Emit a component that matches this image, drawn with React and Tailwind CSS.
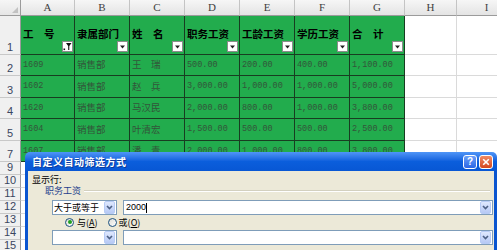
import React from "react";

const W = ["w-[54px]", "w-[55px]", "w-[55px]", "w-[55px]", "w-[55px]", "w-[55px]", "w-[55px]", "w-[52px]", "w-[60px]"];
const LETTERS = ["A", "B", "C", "D", "E", "F", "G", "H", "I"];
const HEAD = ["工　号", "隶属部门", "姓　名", "职务工资", "工龄工资", "学历工资", "合　计"];
const ROWS = [
  { n: "2", h: "h-[21px]", d: ["1609", "销售部", "王　瑞", "500.00", "200.00", "400.00", "1,100.00"] },
  { n: "3", h: "h-[22px]", d: ["1602", "销售部", "赵　兵", "3,000.00", "1,000.00", "1,000.00", "5,000.00"] },
  { n: "4", h: "h-[21px]", d: ["1620", "销售部", "马汉民", "2,000.00", "800.00", "1,000.00", "3,800.00"] },
  { n: "5", h: "h-[22px]", d: ["1604", "销售部", "叶清宏", "1,500.00", "500.00", "500.00", "2,500.00"] },
  { n: "7", h: "h-[21px]", d: ["1607", "销售部", "潘　青", "2,000.00", "1,000.00", "800.00", "3,800.00"] },
];
const EMPTY = ["9", "10", "11", "12", "13", "14", "15"];

const cjk = { fontFamily: '"Noto Sans CJK SC", "Noto Sans", sans-serif' };
const mono = { fontFamily: '"Liberation Mono", "DejaVu Sans Mono", monospace' };

function RowHead({ n, h }) {
  return (
    <div
      className={`${h} w-[21px] shrink-0 bg-[#f0f0f0] border-r border-b border-r-[#9b9b9b] border-b-[#c8c8c8] flex items-end justify-center pb-[1px] text-[11px] leading-none text-[#3a4660]`}
      style={{ fontFamily: '"Liberation Sans", Arial, sans-serif' }}
    >
      {n}
    </div>
  );
}

function FilterBtn({ active }) {
  return (
    <div className="absolute right-[1px] bottom-[2px] w-[11px] h-[11px] bg-white border border-[#8c8c8c] flex items-center justify-center">
      {active ? (
        <svg width="9" height="9" viewBox="0 0 9 9">
          <polygon points="3,1 8.5,1 6.3,4 6.3,8 5.2,8 5.2,4" fill="#111" />
          <rect x="0.5" y="6.5" width="1.6" height="1.6" fill="#111" />
        </svg>
      ) : (
        <svg width="7" height="4" viewBox="0 0 7 4">
          <polygon points="1,0.5 6,0.5 3.5,3.5" fill="#222" />
        </svg>
      )}
    </div>
  );
}

function DropBtn() {
  return (
    <div className="w-[11px] h-[13px] mr-[1px] shrink-0 rounded-[2px] border border-[#b7cbf5] bg-gradient-to-b from-[#dfe8fd] to-[#b6c9f5] flex items-center justify-center">
      <svg width="7" height="5" viewBox="0 0 7 5">
        <polyline points="1,1 3.5,3.6 6,1" fill="none" stroke="#4d6185" strokeWidth="1.6" />
      </svg>
    </div>
  );
}

function Radio({ on }) {
  return (
    <div className="w-[9px] h-[9px] rounded-full border border-[#1c5180] bg-gradient-to-br from-[#dcdcd6] to-white flex items-center justify-center">
      {on && <div className="w-[4px] h-[4px] rounded-full bg-[#21a121]" />}
    </div>
  );
}

function Dialog() {
  return (
    <div className="absolute left-[25px] top-[152px] w-[472px] h-[98px] flex flex-col" style={cjk}>
      <div className="h-[19px] shrink-0 rounded-t-[5px] bg-gradient-to-b from-[#4f95f7] via-[#0b5edc] to-[#0857d4] flex items-center pl-[7px] pr-[4px]">
        <span className="text-[10px] font-bold text-white leading-none tracking-[0.5px]" style={{ textShadow: "1px 1px 0 #0a3a9a" }}>
          自定义自动筛选方式
        </span>
        <div className="ml-auto flex gap-[2px]">
          <div className="w-[14px] h-[14px] rounded-[3px] border border-white bg-gradient-to-b from-[#6b9ff8] to-[#2a66e6] flex items-center justify-center text-white text-[10px] font-bold leading-none" style={{ fontFamily: '"Liberation Sans", Arial, sans-serif' }}>
            ?
          </div>
          <div className="w-[14px] h-[14px] rounded-[3px] border border-white bg-gradient-to-b from-[#f08a64] to-[#d4461c] flex items-center justify-center">
            <svg width="8" height="8" viewBox="0 0 8 8">
              <path d="M1.2 1.2 L6.8 6.8 M6.8 1.2 L1.2 6.8" stroke="#fff" strokeWidth="1.6" />
            </svg>
          </div>
        </div>
      </div>
      <div className="flex-1 bg-[#ece9d8] border-l-[3px] border-r-[3px] border-[#0a55d0] pt-[3px] text-[9px] text-black">
        <div className="h-[11px] leading-[11px] pl-[4px]">显示行:</div>
        <div className="h-[11px] flex items-center pl-[17px] pr-[4px]">
          <span className="leading-[11px] text-[#1e3f8c]">职务工资</span>
          <div className="flex-1 ml-[3px] border-t border-b border-t-[#d3d0bf] border-b-white" />
        </div>
        <div className="mt-[4px] h-[15px] flex pl-[24px] pr-[1px] gap-[6px]">
          <div className="w-[65px] h-full bg-white border border-[#7f9db9] flex items-center">
            <span className="flex-1 pl-[1px] leading-none">大于或等于</span>
            <DropBtn />
          </div>
          <div className="flex-1 h-full bg-white border border-[#7f9db9] flex items-center">
            <span className="pl-[2px] leading-none" style={{ fontFamily: '"Liberation Sans", Arial, sans-serif' }}>2000</span>
            <div className="w-[1px] h-[10px] bg-black" />
            <div className="flex-1" />
            <DropBtn />
          </div>
        </div>
        <div className="h-[14px] flex items-center pl-[37px]">
          <Radio on />
          <span className="ml-[3px] leading-none">
            与(<span className="underline">A</span>)
          </span>
          <div className="ml-[10px]">
            <Radio />
          </div>
          <span className="ml-[2px] leading-none">
            或(<span className="underline">O</span>)
          </span>
        </div>
        <div className="mt-[1px] h-[15px] flex pl-[24px] pr-[1px] gap-[6px]">
          <div className="w-[65px] h-full bg-white border border-[#7f9db9] flex items-center justify-end">
            <DropBtn />
          </div>
          <div className="flex-1 h-full bg-white border border-[#7f9db9] flex items-center justify-end">
            <DropBtn />
          </div>
        </div>
      </div>
    </div>
  );
}

export default function App() {
  return (
    <div className="relative w-[497px] h-[250px] overflow-hidden bg-white">
      {/* column headers */}
      <div className="flex h-[16px]">
        <div className="w-[21px] shrink-0 h-full bg-gradient-to-b from-[#f6f6f6] to-[#e6e6e6] border-r border-b border-[#9b9b9b] flex items-end justify-end p-[2px]">
          <svg width="6" height="6" viewBox="0 0 6 6">
            <polygon points="6,0 6,6 0,6" fill="#c2c2c2" />
          </svg>
        </div>
        {LETTERS.map((l, i) => (
          <div
            key={l}
            className={`${W[i]} shrink-0 h-full bg-gradient-to-b from-[#f6f6f6] to-[#e4e4e4] border-r border-b border-r-[#c4c4c4] border-b-[#9b9b9b] flex items-center justify-center text-[11px] text-[#404040]`}
            style={{ fontFamily: '"Liberation Serif", "Times New Roman", serif' }}
          >
            {l}
          </div>
        ))}
      </div>
      {/* row 1 */}
      <div className="flex">
        <RowHead n="1" h="h-[39px]" />
        {HEAD.map((t, i) => (
          <div
            key={i}
            className={`${W[i]} shrink-0 h-[39px] relative bg-[#22ac4d] border-r border-b border-[#183d21] flex items-center pl-[2px] pb-[1px]`}
          >
            <span className="text-[10.5px] font-bold text-black leading-none" style={cjk}>{t}</span>
            <FilterBtn active={i === 0} />
          </div>
        ))}
        {[7, 8].map((i) => (
          <div key={i} className={`${W[i]} shrink-0 h-[39px] border-r border-b border-[#dadada]`} />
        ))}
      </div>
      {ROWS.map((r) => (
        <div key={r.n} className="flex">
          <RowHead n={r.n} h={r.h} />
          {r.d.map((v, i) => (
            <div
              key={i}
              className={`${W[i]} ${r.h} shrink-0 bg-[#22ac4d] border-r border-b border-[#183d21] flex items-center pl-[2px] text-[#33553a] leading-none`}
            >
              {i === 1 || i === 2 ? (
                <span className="text-[9.5px]" style={cjk}>{v}</span>
              ) : (
                <span className="text-[8.5px]" style={mono}>{v}</span>
              )}
            </div>
          ))}
          {[7, 8].map((i) => (
            <div key={i} className={`${W[i]} ${r.h} shrink-0 border-r border-b border-[#dadada]`} />
          ))}
        </div>
      ))}
      {EMPTY.map((n) => (
        <div key={n} className="flex">
          <RowHead n={n} h="h-[13px]" />
          {W.map((w, i) => (
            <div key={i} className={`${w} h-[13px] shrink-0 border-r border-b border-[#dadada]`} />
          ))}
        </div>
      ))}
      <Dialog />
    </div>
  );
}
